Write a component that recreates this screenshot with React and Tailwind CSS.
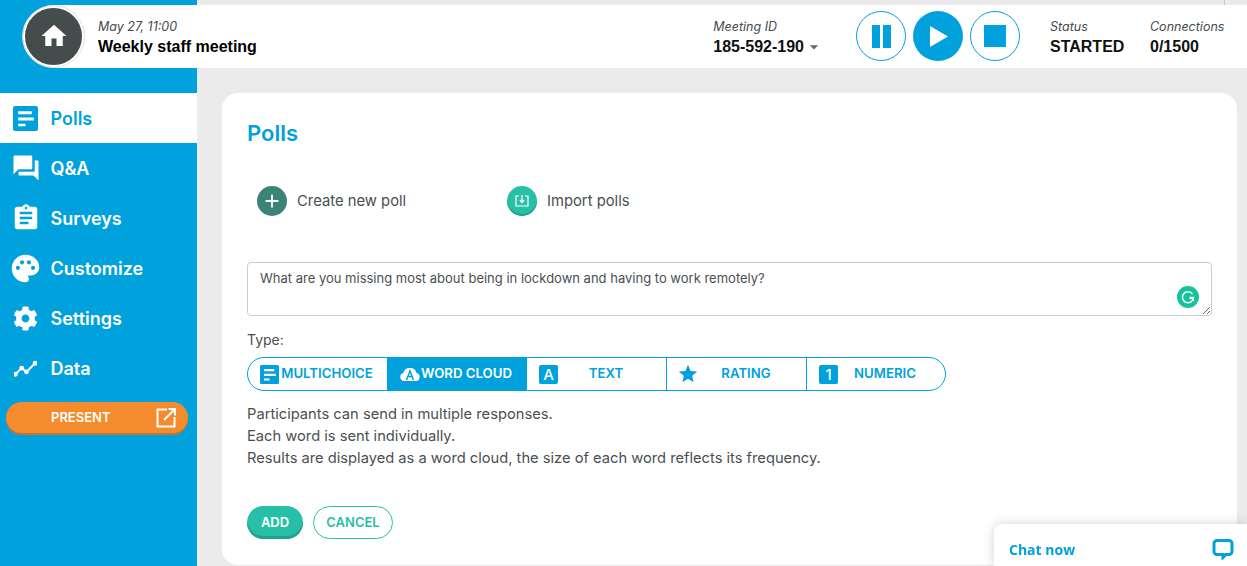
import { MdHome, MdQuestionAnswer, MdAssignment, MdPalette, MdStar, MdArrowDropDown, MdAdd } from "react-icons/md";
import { FaCog } from "react-icons/fa";

const font = "font-['Inter','Liberation_Sans',sans-serif]";
const headerBold = "-mt-[1px] font-['Liberation_Sans',sans-serif] text-[16px] leading-[22px] font-bold";
const headerLabel = "text-[12.500px] leading-[20px] text-[#454c4c] italic";

function PollIcon({ className }) {
  return (
    <svg viewBox="0 0 24 24" className={className} fill="currentColor">
      <path fillRule="evenodd" d="M2 0h20a2 2 0 0 1 2 2v20a2 2 0 0 1-2 2H2a2 2 0 0 1-2-2V2a2 2 0 0 1 2-2zM5 5v3h13V5H5zm0 6v3h15v-3H5zm0 6v2.500h7V17H5z" />
    </svg>
  );
}

function DataIcon({ className }) {
  return (
    <svg viewBox="0 0 24 24" className={className} fill="none" stroke="currentColor" strokeWidth="2">
      <path d="M1.500 18l6.500-6.500 5 4L22 6.500" />
      <circle cx="8" cy="11.500" r="1.500" fill="currentColor" />
      <circle cx="13" cy="15.500" r="1.500" fill="currentColor" />
      <circle cx="22" cy="6.500" r="1.500" fill="currentColor" />
      <circle cx="1.500" cy="18" r="1.500" fill="currentColor" />
    </svg>
  );
}

const navItems = [
  { label: "Polls", icon: PollIcon, iconClass: "h-[25px] w-[25px]", active: true },
  { label: "Q&A", icon: MdQuestionAnswer, iconClass: "-mx-[2.500px] h-[30px] w-[30px]" },
  { label: "Surveys", icon: MdAssignment, iconClass: "-mx-[2.500px] h-[30px] w-[30px]" },
  { label: "Customize", icon: MdPalette, iconClass: "-mx-[4px] h-[33px] w-[33px]" },
  { label: "Settings", icon: FaCog, iconClass: "h-[25px] w-[25px]" },
  { label: "Data", icon: DataIcon, iconClass: "mx-[1px] h-[23px] w-[23px]" },
];

function LetterBox({ children }) {
  return (
    <span className="flex h-[19px] w-[19px] items-center justify-center rounded-[2px] bg-[#00a1dc] text-[15px] leading-none font-medium text-white">
      {children}
    </span>
  );
}

function CloudIcon() {
  return (
    <svg viewBox="0 0 20 14" className="h-[14px] w-[20px]">
      <path fill="#fff" d="M4 14a4 4 0 0 1-.6-7.900A6.500 6.500 0 0 1 10 1a6.500 6.500 0 0 1 6.500 5.100A4 4 0 0 1 16 14H4z" />
      <path fill="none" stroke="#00a1dc" strokeWidth="1.500" d="M6.500 13L10 4l3.500 9M8 9.500h4" />
    </svg>
  );
}

const pollTypes = [
  { label: "MULTICHOICE", icon: <PollIcon className="h-[19px] w-[19px] text-[#00a1dc]" /> },
  { label: "WORD CLOUD", icon: <CloudIcon />, active: true },
  { label: "TEXT", icon: <LetterBox>A</LetterBox> },
  { label: "RATING", icon: <MdStar className="ml-[-2px] h-[24px] w-[24px] text-[#00a1dc]" /> },
  { label: "NUMERIC", icon: <LetterBox>1</LetterBox> },
];

export default function App() {
  return (
    <div className={`flex h-[566px] w-full overflow-hidden bg-[#ebebeb] ${font}`}>
      {/* Sidebar */}
      <aside className="flex w-[197px] shrink-0 flex-col bg-[#00a1dc] pt-[93px]">
        {navItems.map((item) => (
          <div
            key={item.label}
            className={`flex h-[50px] items-center gap-[12.500px] pl-[13px] text-[18px] font-semibold ${
              item.active ? "bg-white text-[#00a1dc]" : "text-white"
            }`}
          >
            <item.icon className={`shrink-0 ${item.iconClass}`} />
            {item.label}
          </div>
        ))}
        <div className="mt-[9px] mr-[9px] ml-[6px] flex h-[31px] items-center justify-between rounded-full bg-[#f48b2c] pr-[12px] pl-[45px] text-[13px] font-semibold text-white shadow-[0_2px_0_#c9722a]">
          PRESENT
          <svg viewBox="0 0 20 20" className="h-[20px] w-[20px]" fill="none" stroke="currentColor" strokeWidth="2">
            <path d="M11 1.500H1.500v17h17V9M8 12L18.500 1.500M12.500 1h6.500v6.500" />
          </svg>
        </div>
      </aside>

      {/* Main column */}
      <div className="flex min-w-0 flex-1 flex-col">
        <div className="flex h-[5px] shrink-0 justify-end pr-[22px]">
          <span className="w-[1px] bg-[#c8c8c8]" />
        </div>
        <header className="relative z-10 ml-[-174px] flex h-[63px] shrink-0 items-center rounded-l-full bg-white pb-[1px]">
          <div className="flex h-[61px] w-[61px] shrink-0 items-center justify-center rounded-full border-2 border-white bg-[#454c4c] outline-1 outline-[#e0e0e0]">
            <MdHome className="h-[30px] w-[30px] text-white" />
          </div>
          <div className="ml-[14px] flex flex-col pt-[3px]">
            <span className={headerLabel}>May 27, 11:00</span>
            <span className={`${headerBold} text-black`}>Weekly staff meeting</span>
          </div>
          <div className="ml-auto flex flex-col pt-[3px]">
            <span className={headerLabel}>Meeting ID</span>
            <span className={`${headerBold} flex items-center text-[#111]`}>
              185-592-190
              <MdArrowDropDown className="h-[20px] w-[20px] text-[#666]" />
            </span>
          </div>
          <div className="ml-[32px] flex items-center gap-[7px]">
            <button className="flex h-[50px] w-[50px] items-center justify-center rounded-full border border-[#00a1dc]">
              <span className="flex gap-[3px]">
                <span className="h-[23px] w-[8px] bg-[#00a1dc]" />
                <span className="h-[23px] w-[8px] bg-[#00a1dc]" />
              </span>
            </button>
            <button className="flex h-[50px] w-[50px] items-center justify-center rounded-full bg-[#00a1dc]">
              <svg viewBox="0 0 18 21" className="ml-[1px] h-[21px] w-[18px]" fill="#fff">
                <path d="M0 0l18 10.500L0 21z" />
              </svg>
            </button>
            <button className="flex h-[50px] w-[50px] items-center justify-center rounded-full border border-[#00a1dc]">
              <span className="h-[22px] w-[22px] bg-[#00a1dc]" />
            </button>
          </div>
          <div className="ml-[30px] flex w-[100px] flex-col pt-[3px]">
            <span className={headerLabel}>Status</span>
            <span className={`${headerBold} text-[#111]`}>STARTED</span>
          </div>
          <div className="flex w-[97px] flex-col pt-[3px]">
            <span className={headerLabel}>Connections</span>
            <span className={`${headerBold} text-[#111]`}>0/1500</span>
          </div>
        </header>

        {/* Polls card */}
        <main className="mt-[25px] mr-[10px] ml-[25px] h-[472px] shrink-0 rounded-[16px] bg-white px-[25px] pt-[26px]">
          <h1 className="text-[22px] leading-[28px] font-semibold text-[#00a1dc]">Polls</h1>

          <div className="mt-[39px] flex pl-[10px] text-[14.800px] text-[#4a4f52]">
            <div className="flex w-[250px] items-center gap-[10px]">
              <span className="flex h-[30px] w-[30px] items-center justify-center rounded-full bg-[#3b8277]">
                <MdAdd className="h-[22px] w-[22px] text-white" />
              </span>
              Create new poll
            </div>
            <div className="flex items-center gap-[10px]">
              <span className="flex h-[30px] w-[30px] items-center justify-center rounded-full bg-[#27bfa8] shadow-[inset_0_-2px_0_#22a18e]">
                <svg viewBox="0 0 14 14" className="h-[14px] w-[14px]" fill="none" stroke="#fff" strokeWidth="1.200">
                  <path d="M4 2H1v10h12V2h-3M7 1v7M4.800 6L7 8.500 9.200 6" />
                </svg>
              </span>
              Import polls
            </div>
          </div>

          <div className="relative mt-[46px] h-[54px]">
            <textarea
              readOnly
              value="What are you missing most about being in lockdown and having to work remotely?"
              className="block h-full w-full rounded-[4px] border border-[#cccccc] px-[12px] py-[6px] text-[13px] leading-[18px] text-[#4a4f52] outline-none"
            />
            <span className="absolute right-[13px] bottom-[8px] flex h-[22px] w-[22px] items-center justify-center rounded-full bg-[#15c39a]">
              <svg viewBox="0 0 14 14" className="h-[14px] w-[14px]" fill="none" stroke="#fff" strokeWidth="1.500">
                <path d="M11.500 4A5.500 5.500 0 1 0 12.500 7.500H8.500M12.800 11l-2-3.500-2 1.500" />
              </svg>
            </span>
          </div>

          <div className="mt-[15px] text-[14px] leading-[18px] text-[#4a4f52]">Type:</div>

          <div className="mt-[8px] flex h-[34px] w-[699px] overflow-hidden rounded-full border-[1.5px] border-[#00a1dc] text-[13.200px] font-semibold">
            {pollTypes.map((type) => (
              <div
                key={type.label}
                className={`flex w-[140px] shrink-0 items-center border-r border-[#00a1dc] pl-[12px] last:border-r-0 last:pr-[3px] [&:nth-child(2)]:w-[139px] ${
                  type.active ? "bg-[#00a1dc] text-white" : "text-[#00a1dc]"
                }`}
              >
                <span className="flex w-[20px] shrink-0 justify-start">{type.icon}</span>
                <span className="flex-1 pr-[13px] text-center whitespace-nowrap">{type.label}</span>
              </div>
            ))}
          </div>

          <div className="mt-[12px] text-[14.700px] leading-[22px] text-[#4a4f52]">
            <p>Participants can send in multiple responses.</p>
            <p>Each word is sent individually.</p>
            <p>Results are displayed as a word cloud, the size of each word reflects its frequency.</p>
          </div>

          <div className="mt-[37px] flex items-center gap-[10px] text-[13px] font-semibold">
            <button className="h-[33px] w-[56px] rounded-full bg-[#27bfa8] text-white shadow-[inset_0_-3px_0_#22a18e]">ADD</button>
            <button className="h-[33px] w-[80px] rounded-full border border-[#27bfa8] text-[#27bfa8]">CANCEL</button>
          </div>
        </main>
      </div>

      {/* Chat widget */}
      <div className="fixed right-0 bottom-0 z-20 flex h-[42px] w-[253px] justify-between rounded-tl-[8px] bg-white pt-[16px] pr-[13px] pl-[15px] shadow-[0_0_12px_rgba(0,0,0,0.18)]">
        <span className="font-['Open_Sans',sans-serif] text-[14px] leading-[20px] font-bold text-[#00a1dc]">Chat now</span>
        <svg viewBox="0 0 22 22" className="h-[22px] w-[22px] -translate-y-[2px]" fill="none" stroke="#00a1dc" strokeWidth="3">
          <path d="M5 2.500h12a3 3 0 0 1 3 3v8a3 3 0 0 1-3 3h-3l-3 3v-3H5a3 3 0 0 1-3-3v-8a3 3 0 0 1 3-3z" />
        </svg>
      </div>
    </div>
  );
}
